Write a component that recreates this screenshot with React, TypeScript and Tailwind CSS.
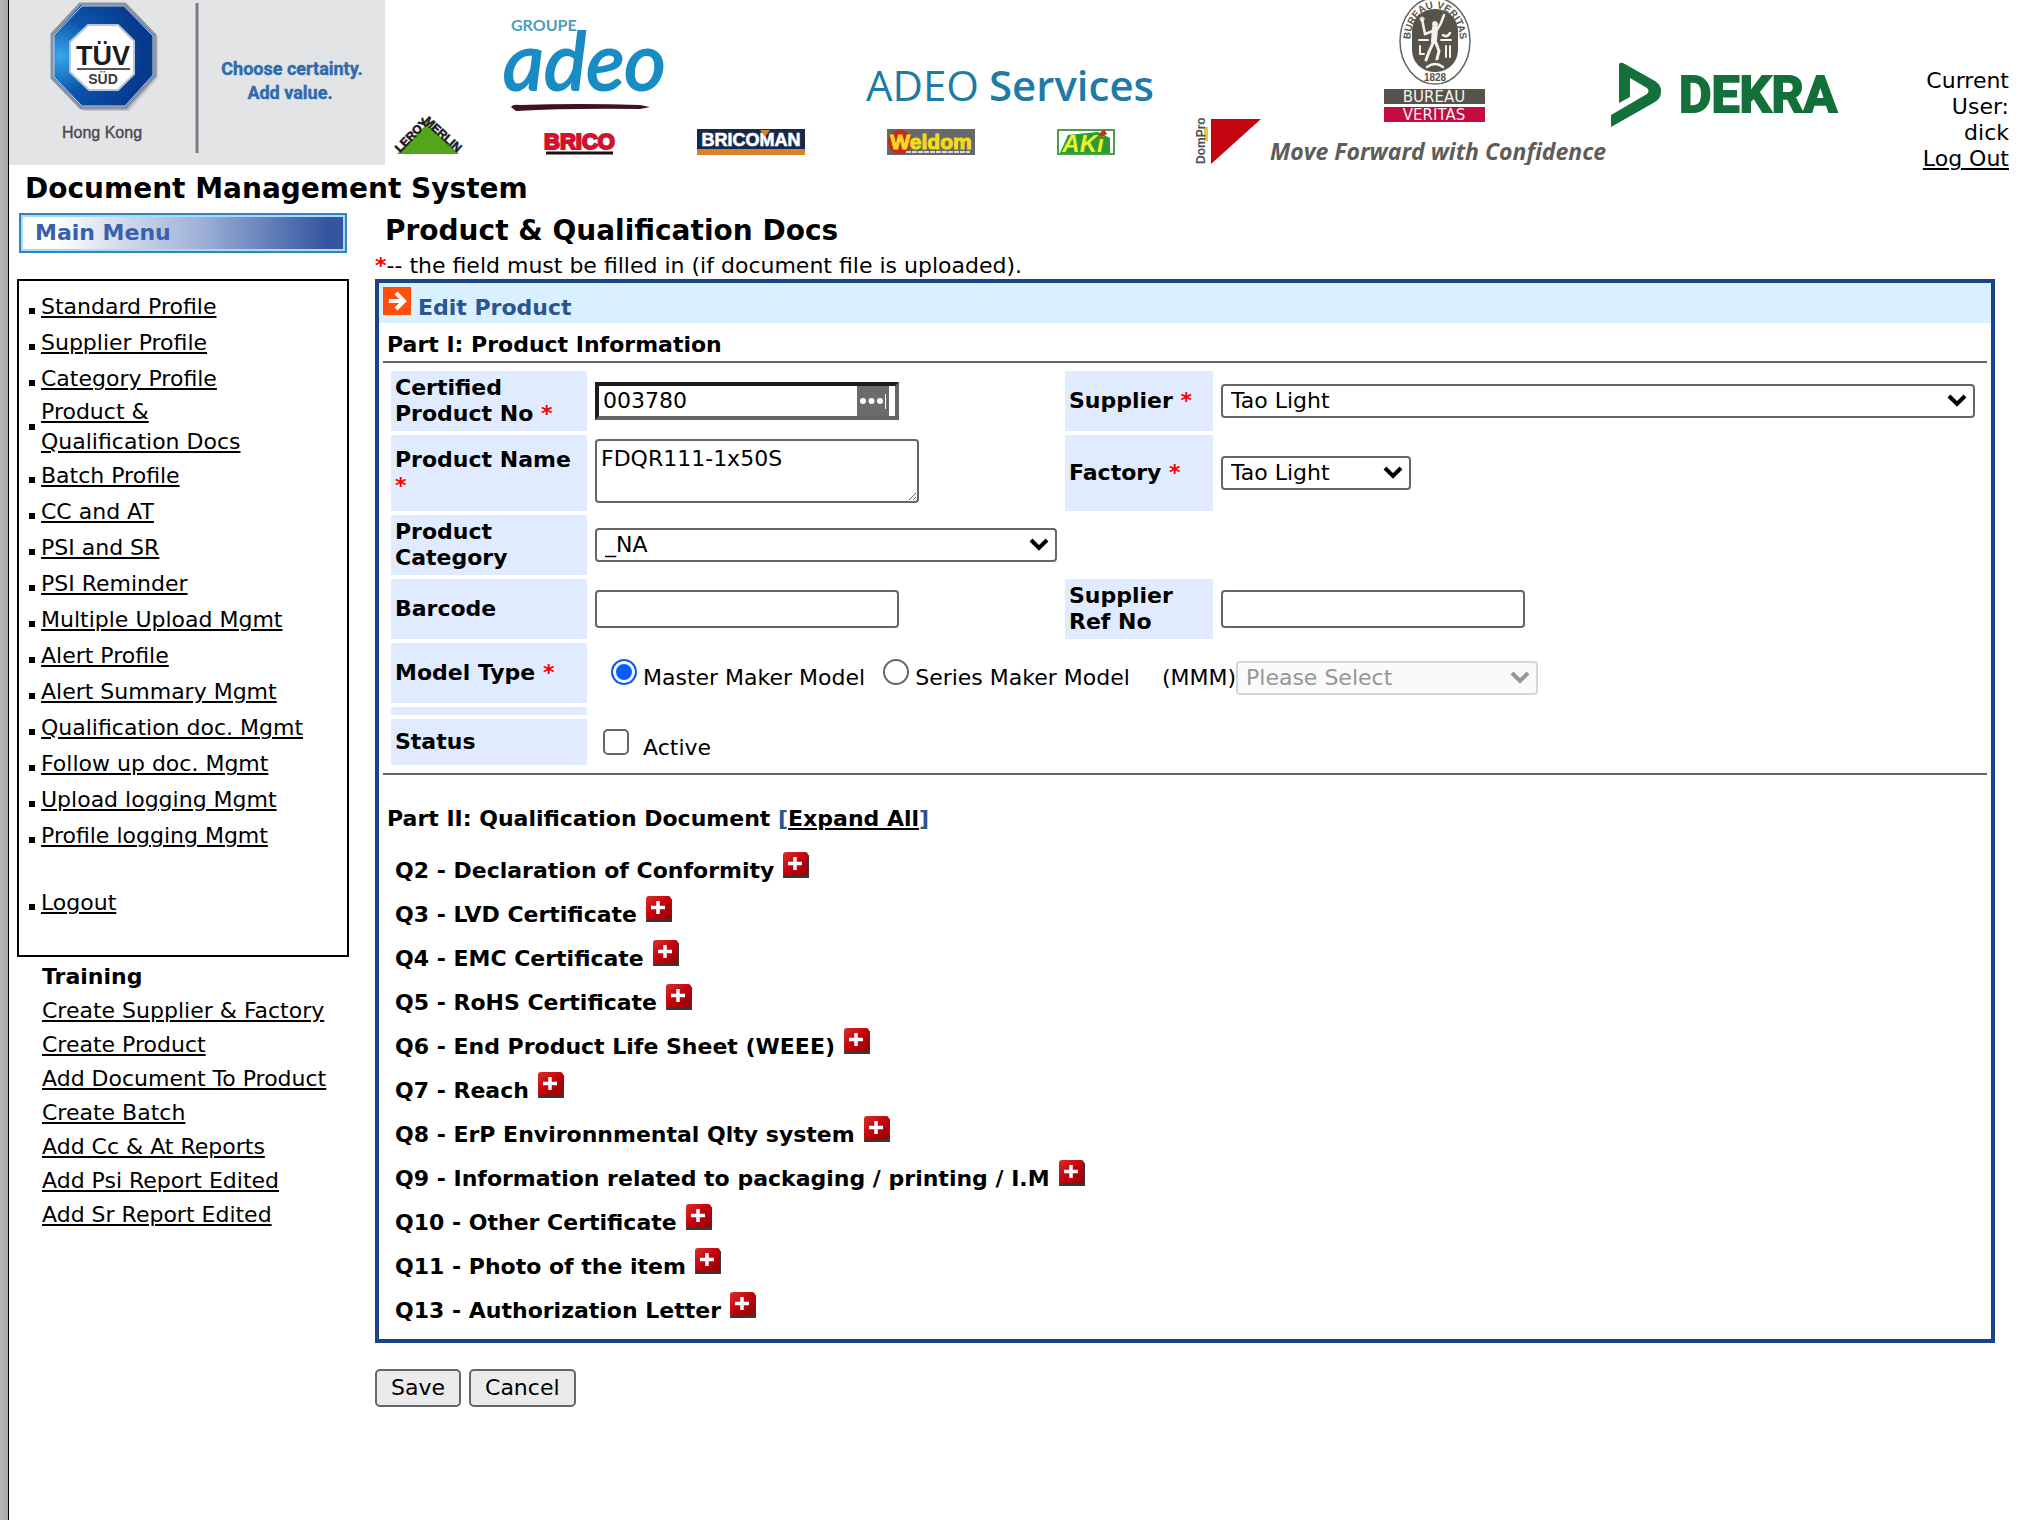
import { useState } from "react";

const menuItems = [
  "Standard Profile",
  "Supplier Profile",
  "Category Profile",
  "Product & Qualification Docs",
  "Batch Profile",
  "CC and AT",
  "PSI and SR",
  "PSI Reminder",
  "Multiple Upload Mgmt",
  "Alert Profile",
  "Alert Summary Mgmt",
  "Qualification doc. Mgmt",
  "Follow up doc. Mgmt",
  "Upload logging Mgmt",
  "Profile logging Mgmt",
];

const trainingItems = [
  "Create Supplier & Factory",
  "Create Product",
  "Add Document To Product",
  "Create Batch",
  "Add Cc & At Reports",
  "Add Psi Report Edited",
  "Add Sr Report Edited",
];

const documents = [
  "Q2 - Declaration of Conformity",
  "Q3 - LVD Certificate",
  "Q4 - EMC Certificate",
  "Q5 - RoHS Certificate",
  "Q6 - End Product Life Sheet (WEEE)",
  "Q7 - Reach",
  "Q8 - ErP Environnmental Qlty system",
  "Q9 - Information related to packaging / printing / I.M",
  "Q10 - Other Certificate",
  "Q11 - Photo of the item",
  "Q13 - Authorization Letter",
];

const linkClass = "underline decoration-2 underline-offset-2";
const labelClass = "flex items-center bg-[#e0ebff] px-1 font-bold";
const inputClass =
  "h-[38px] w-[304px] rounded-[4px] border-2 border-[#666] bg-white px-2 outline-none";

function TuvLogo() {
  return (
    <svg viewBox="9 0 376 165" className="h-[165px] w-[376px] shrink-0 bg-[#e3e4e6]" role="img" aria-label="TÜV SÜD Hong Kong">
      <defs>
        <radialGradient id="tuvBlue" cx="0.08" cy="0.5" r="0.8">
          <stop offset="0" stopColor="#38a6ea" />
          <stop offset="0.45" stopColor="#0b55ab" />
          <stop offset="1" stopColor="#073a8c" />
        </radialGradient>
      </defs>
      <path d="M83 6 L129 6 L158 37 L158 78 L129 111 L84 111 L54 80 Z" fill="#b3b5ba" opacity="0.6" />
      <path d="M80 4 L125 4 L155 35 L155 76 L126 108 L81 108 L52 78 L52 34 Z" fill="url(#tuvBlue)" stroke="#8b93a5" strokeWidth="3" />
      <path d="M82 6 L124 6 L153 36 L153 75 L125 106 L82 106 L54 77 L54 35 Z" fill="none" stroke="#c9d6ea" strokeWidth="1" />
      <path d="M88 25 L118 25 L134 41 L134 74 L118 90 L89 90 L70 72 L70 42 Z" fill="#fff" stroke="#b9c6da" strokeWidth="2" />
      <text x="103" y="65" textAnchor="middle" fontSize="27" fontWeight="700" fontFamily="Liberation Sans, Arial, sans-serif" fill="#1b1b1e">TÜV</text>
      <path d="M77 69 H130" stroke="#55565a" strokeWidth="2" />
      <text x="103" y="84" textAnchor="middle" fontSize="14" fontWeight="700" fontFamily="Liberation Sans, Arial, sans-serif" fill="#3a3a3e">SÜD</text>
      <text x="102" y="138" textAnchor="middle" fontSize="16" fontFamily="Liberation Sans, Arial, sans-serif" fill="#4a4a4e" stroke="#4a4a4e" strokeWidth="0.4">Hong Kong</text>
      <path d="M197 3 V153" stroke="#7b7c82" strokeWidth="3" />
      <g fontSize="18" fontWeight="700" fontFamily="Roboto, sans-serif" fill="#2d6aae" stroke="#2d6aae" strokeWidth="0.4" textAnchor="middle">
        <text x="292" y="75">Choose certainty.</text>
        <text x="290" y="99">Add value.</text>
      </g>
    </svg>
  );
}

function PartnerLogos() {
  return (
    <svg viewBox="385 0 1460 165" className="h-[165px] w-[1460px]" role="img" aria-label="Partner companies">
      {/* Groupe Adeo */}
      <text x="511" y="31" fontSize="16" fontFamily="Lato, sans-serif" fontWeight="700" fill="#4b9dbd">GROUPE</text>
      <text x="503" y="90" fontSize="80" fontStyle="italic" fontFamily="Lato, sans-serif" fill="#1a8cc4" stroke="#1a8cc4" strokeWidth="2">adeo</text>
      <path d="M511 107 Q513 104 520 105 Q580 103 640 105 L650 107 L640 109 Q570 108 516 111 Z" fill="#3e141c" />

      {/* Leroy Merlin */}
      <path d="M427 124 L459 154 H397 Z" fill="#55a51c" />
      <g fontFamily="Liberation Sans, Arial, sans-serif" fontWeight="700" fill="#1c1c1c" stroke="#1c1c1c" strokeWidth="0.6">
        <text transform="translate(400 153) rotate(-46)" fontSize="12">LEROY</text>
        <text transform="translate(423 122) rotate(42)" fontSize="12">MERLIN</text>
      </g>

      {/* Brico */}
      <text x="544" y="149" fontSize="22" fontWeight="700" fontFamily="Liberation Sans, Arial, sans-serif" fill="#d2122e" stroke="#d2122e" strokeWidth="2">BRICO</text>
      <path d="M546 153 H613" stroke="#1d1014" strokeWidth="3" />

      {/* Bricoman */}
      <rect x="697" y="129" width="108" height="20" fill="#17284a" />
      <rect x="697" y="149" width="108" height="6" fill="#d8822c" />
      <text x="751" y="146" textAnchor="middle" fontSize="18" fontWeight="700" fontFamily="Liberation Sans, Arial, sans-serif" fill="#fff" stroke="#fff" strokeWidth="0.6">BRICOMAN</text>
      <path d="M760 130 H770 L765 137 Z" fill="#d8822c" />

      {/* Adeo Services */}
      <g fontSize="42" fontFamily="Open Sans, sans-serif" fill="#1d7ba6">
        <text x="866" y="101">ADEO</text>
        <text x="989" y="101" fontWeight="600">Services</text>
      </g>

      {/* Weldom */}
      <rect x="887" y="129" width="88" height="26" fill="#66686a" />
      <circle cx="900" cy="142" r="12" fill="#c8281e" />
      <text x="931" y="149" textAnchor="middle" fontSize="21" fontWeight="700" fontFamily="Liberation Sans, Arial, sans-serif" fill="#f4dc1c" stroke="#f4dc1c">Weldom</text>
      <path d="M906 152 H970" stroke="#d8d8d8" strokeWidth="2" strokeDasharray="5 1" />

      {/* Aki */}
      <rect x="1058" y="130" width="56" height="24" fill="#fff" stroke="#4aa04a" strokeWidth="2" />
      <path d="M1060 153 L1068 135 L1098 132 L1110 138 V153 Z" fill="#2a9a33" />
      <text x="1083" y="152" textAnchor="middle" fontSize="24" fontWeight="700" fontStyle="italic" fontFamily="Liberation Sans, Arial, sans-serif" fill="#eef02a">AKi</text>
      <path d="M1098 135 L1104 129 L1107 134 L1102 137 Z" fill="#c62f22" />

      {/* DomPro */}
      <path d="M1206 127 V141" stroke="#ecc63a" strokeWidth="4" />
      <text transform="translate(1205 164) rotate(-90)" fontSize="12" fontWeight="700" fontFamily="Liberation Sans, Arial, sans-serif" fill="#47505c">DomPro</text>
      <path d="M1211 119 H1261 L1211 164 Z" fill="#c4040f" />

      {/* Bureau Veritas */}
      <ellipse cx="1435" cy="41" rx="35" ry="43" fill="#fff" stroke="#6a675f" strokeWidth="1.5" />
      <rect x="1412" y="9" width="46" height="63" rx="22" fill="#57534a" />
      <path id="bvTop" d="M1410 48 C1407 -5 1463 -5 1460 48" fill="none" />
      <g fontFamily="Liberation Sans, Arial, sans-serif" fontWeight="700" fill="#57534a">
        <text fontSize="10" textAnchor="middle">
          <textPath href="#bvTop" startOffset="50%">BUREAU VERITAS</textPath>
        </text>
        <text x="1435" y="81" fontSize="10" textAnchor="middle">1828</text>
      </g>
      <g stroke="#f3f2ee" fill="none" strokeLinecap="round">
        <circle cx="1435" cy="24" r="2.5" fill="#f3f2ee" />
        <path d="M1435 28 L1434 41" strokeWidth="6" />
        <path d="M1433 31 L1425 34 L1422 19 M1437 30 L1441 23 L1444 15" strokeWidth="2.5" />
        <path d="M1433 43 L1429 52 L1426 60 M1436 43 L1439 51 L1437 59" strokeWidth="3" />
        <path d="M1419 40 H1428 M1441 40 H1451 M1420 46 V54 H1424 M1446 46 V57 M1450 46 V57" strokeWidth="2" />
        <path d="M1443 35 Q1447 38 1450 33 M1427 67 Q1435 61 1443 67" strokeWidth="2.5" />
        <circle cx="1422" cy="19" r="2" />
      </g>
      <rect x="1384" y="89" width="101" height="15" fill="#57534a" />
      <rect x="1384" y="107" width="101" height="15" fill="#c50b42" />
      <g fontSize="15" fontFamily="DejaVu Sans, sans-serif" fill="#f3f2ee" textAnchor="middle">
        <text x="1434" y="102">BUREAU</text>
        <text x="1434" y="120">VERITAS</text>
      </g>
      <text x="1270" y="160" fontSize="23" fontWeight="700" fontStyle="italic" fontFamily="Open Sans, sans-serif" fill="#5d5c58">Move Forward with Confidence</text>

      {/* Dekra */}
      <path d="M1619 64 Q1620 62 1623 63 L1655 81 Q1662 86 1661 92 Q1661 98 1655 102 L1611 127 V115 L1647 94 Q1650 91 1647 88 L1630 78 V97 L1619 103 Z" fill="#14703a" />
      <text x="1679" y="112" fontSize="50" fontWeight="700" fontFamily="Roboto, sans-serif" fill="#14703a" stroke="#14703a" strokeWidth="2">DEKRA</text>
    </svg>
  );
}

function PlusIcon() {
  return (
    <svg viewBox="0 0 27 27" className="block size-[27px]" aria-hidden="true">
      <defs>
        <linearGradient id="plusRed" x1="0" y1="0" x2="1" y2="1">
          <stop offset="0" stopColor="#d8302c" />
          <stop offset="0.5" stopColor="#c4020c" />
          <stop offset="1" stopColor="#8e0208" />
        </linearGradient>
      </defs>
      <path d="M2 4 H27 V27 H1 Z" fill="#3d3434" />
      <rect x="1" y="1" width="25" height="23" rx="3" fill="url(#plusRed)" />
      <path d="M13 6 V19 M6 12.5 H20" stroke="#fff" strokeWidth="3.5" />
    </svg>
  );
}

function SelectBox({ id, label, value, className = "", disabled = false }) {
  return (
    <span className={`relative inline-flex ${className}`}>
      <select
        id={id}
        aria-label={label}
        disabled={disabled}
        defaultValue={value}
        className="h-[34px] w-full appearance-none rounded-[4px] border-2 border-[#666] bg-white pl-2 pr-8 leading-[26px] text-black outline-none disabled:border-[#d6d6d6] disabled:bg-[#fafafa] disabled:text-[#969696] disabled:opacity-100"
      >
        <option>{value}</option>
      </select>
      <svg
        viewBox="0 0 20 13"
        className={`pointer-events-none absolute right-2 top-[10px] h-[13px] w-5 ${disabled ? "text-[#969696]" : "text-black"}`}
        aria-hidden="true"
      >
        <path d="M2 2 L10 10 L18 2" fill="none" stroke="currentColor" strokeWidth="4" />
      </svg>
    </span>
  );
}

function Required() {
  return <span className="font-bold text-[#ff0000]">*</span>;
}

export default function App() {
  const [productNo, setProductNo] = useState("003780");
  const [productName, setProductName] = useState("FDQR111-1x50S");
  const [modelType, setModelType] = useState("master");
  const [active, setActive] = useState(false);

  const radioClass =
    "size-[26px] shrink-0 appearance-none rounded-full border-2 border-[#666] bg-white checked:border-[#0a5cff] checked:bg-[#0a5cff] checked:shadow-[inset_0_0_0_3px_white]";

  return (
    <div className="flex min-h-screen bg-white font-['DejaVu_Sans',Verdana,sans-serif] text-[22px] leading-[26px] text-black">
      <div className="w-[9px] shrink-0 border-r border-black bg-linear-to-r from-[#b8b8b8] to-[#a6a6a6]" />

      <div className="min-w-0 flex-1">
        <header className="flex">
          <TuvLogo />
          <div className="min-w-0 flex-1 overflow-hidden">
            <PartnerLogos />
          </div>
          <div className="w-[110px] shrink-0 pr-4 pt-[68px] text-right">
            Current User:
            <br />
            dick
            <br />
            <a href="#logout" className={`whitespace-nowrap ${linkClass}`}>Log Out</a>
          </div>
        </header>

        <div className="pl-4 text-[28px] font-bold leading-[34px]">
          Document Management System
        </div>

        <div className="mt-[7px] flex items-start">
          {/* Side menu */}
          <aside className="w-[366px] shrink-0 pl-2 pr-[26px]">
            <div className="mx-0.5 border-2 border-[#2b86c4]">
              <h2 className="border-2 border-[#b5d6f0] bg-linear-to-r from-white from-10% via-[#9fb2d8] via-55% to-[#3655a0] to-95% pl-3 font-bold leading-8 text-[#3b5fa8]">
                Main Menu
              </h2>
            </div>

            <nav className="mt-[26px] border-2 border-black px-2.5 pb-[34px] pt-2">
              <ul>
                {menuItems.map((item) =>
                  item.startsWith("Product") ? (
                    <li key={item} className="flex items-center gap-1.5 pb-px leading-[30px]">
                      <span className="size-1.5 shrink-0 bg-black" />
                      <a href="#menu" className={`w-[210px] ${linkClass}`}>{item}</a>
                    </li>
                  ) : (
                    <li key={item} className="flex items-baseline gap-1.5 leading-9">
                      <span className="size-1.5 shrink-0 bg-black" />
                      <a href="#menu" className={linkClass}>{item}</a>
                    </li>
                  )
                )}
                <li className="mt-[31px] flex items-baseline gap-1.5 leading-9">
                  <span className="size-1.5 shrink-0 bg-black" />
                  <a href="#logout" className={linkClass}>Logout</a>
                </li>
              </ul>
            </nav>

            <div className="mt-[3px] whitespace-nowrap pl-[25px] leading-[34px]">
              <h3 className="font-bold">Training</h3>
              <ul>
                {trainingItems.map((item) => (
                  <li key={item}>
                    <a href="#training" className={linkClass}>{item}</a>
                  </li>
                ))}
              </ul>
            </div>
          </aside>

          {/* Product form */}
          <main className="min-w-0 flex-1 pr-[30px] pt-px">
            <h1 className="pl-2.5 text-[28px] font-bold leading-[34px]">Product & Qualification Docs</h1>
            <p className="mt-[5px]">
              <Required />
              -- the field must be filled in (if document file is uploaded).
            </p>

            <form onSubmit={(e) => e.preventDefault()}>
              <div className="border-4 border-[#1c438a] pb-1.5">
                <div className="flex h-10 items-baseline gap-[7px] bg-[#d8f0ff] pl-1 pt-1">
                  <svg viewBox="0 0 28 28" className="size-7 shrink-0" aria-hidden="true">
                    <rect width="28" height="28" fill="#ff4f0d" />
                    <path d="M6 14 H22 M13 6 L21 14 L13 22" fill="none" stroke="#fff" strokeWidth="4" />
                  </svg>
                  <h2 className="font-bold text-[#2a5590]">Edit Product</h2>
                </div>

                <h3 className="mb-[3px] mt-[9px] pl-2 font-bold">Part I: Product Information</h3>
                <hr className="mx-1 border-t-2 border-[#666]" />

                <div className="mx-3 my-2 grid grid-cols-[196px_470px_148px_1fr] gap-1">
                  <label htmlFor="productNo" className={`min-h-[60px] ${labelClass}`}>
                    <span>
                      Certified
                      <br />
                      Product No <Required />
                    </span>
                  </label>
                  <div className="flex items-center pl-1">
                    <div className="flex h-[38px] w-[304px] border-4 border-b-[#666] border-l-[#1c1c1c] border-r-[#666] border-t-[#1c1c1c] bg-white">
                      <input
                        id="productNo"
                        value={productNo}
                        onChange={(e) => setProductNo(e.target.value)}
                        className="min-w-0 flex-1 pl-1 outline-none"
                      />
                      <button type="button" aria-label="Fill in" className="mr-1.5 flex w-8 items-center justify-center bg-[#6b6b6b]">
                        <svg viewBox="0 0 32 30" className="h-[30px] w-8" aria-hidden="true">
                          <g fill="#fff">
                            <circle cx="6" cy="15" r="3" />
                            <circle cx="14.5" cy="15" r="3" />
                            <circle cx="23" cy="15" r="3" />
                            <rect x="28" y="8" width="1" height="15" />
                          </g>
                        </svg>
                      </button>
                    </div>
                  </div>
                  <label htmlFor="supplier" className={labelClass}>
                    <span>Supplier <Required /></span>
                  </label>
                  <div className="flex items-center px-1">
                    <SelectBox id="supplier" value="Tao Light" className="w-full" />
                  </div>

                  <label htmlFor="productName" className={`min-h-[76px] ${labelClass}`}>
                    <span>
                      Product Name
                      <br />
                      <Required />
                    </span>
                  </label>
                  <div className="pl-1 pt-1">
                    <textarea
                      id="productName"
                      value={productName}
                      onChange={(e) => setProductName(e.target.value)}
                      className="block h-16 w-[324px] rounded-[4px] border-2 border-[#666] bg-white px-1 py-[5px] outline-none"
                    />
                  </div>
                  <label htmlFor="factory" className={labelClass}>
                    <span>Factory <Required /></span>
                  </label>
                  <div className="flex items-center pl-1">
                    <SelectBox id="factory" value="Tao Light" className="w-[190px]" />
                  </div>

                  <label htmlFor="category" className={`min-h-[60px] ${labelClass}`}>
                    <span>
                      Product
                      <br />
                      Category
                    </span>
                  </label>
                  <div className="col-span-3 flex items-center pl-1">
                    <SelectBox id="category" value="_NA" className="w-[462px]" />
                  </div>

                  <label htmlFor="barcode" className={`min-h-[60px] ${labelClass}`}>Barcode</label>
                  <div className="flex items-center pl-1">
                    <input id="barcode" className={inputClass} />
                  </div>
                  <label htmlFor="supplierRef" className={labelClass}>
                    <span>
                      Supplier
                      <br />
                      Ref No
                    </span>
                  </label>
                  <div className="flex items-center pl-1">
                    <input id="supplierRef" className={inputClass} />
                  </div>

                  <div className={`min-h-[60px] ${labelClass}`}>
                    <span>Model Type <Required /></span>
                  </div>
                  <div className="col-span-3 flex items-baseline whitespace-nowrap pl-5 pt-4">
                    <label className="flex items-baseline gap-1.5">
                      <input
                        type="radio"
                        name="modelType"
                        className={radioClass}
                        checked={modelType === "master"}
                        onChange={() => setModelType("master")}
                      />
                      Master Maker Model
                    </label>
                    <label className="ml-[18px] flex items-baseline gap-1.5">
                      <input
                        type="radio"
                        name="modelType"
                        className={radioClass}
                        checked={modelType === "series"}
                        onChange={() => setModelType("series")}
                      />
                      Series Maker Model
                    </label>
                    <span className="ml-8">(MMM)</span>
                    <SelectBox id="mmm" label="MMM" value="Please Select" className="w-[302px]" disabled />
                  </div>

                  <div className="h-2 bg-[#e0ebff]" />
                  <div className="col-span-3" />

                  <div className={`min-h-[46px] ${labelClass}`}>Status</div>
                  <div className="col-span-3 flex pl-3 pt-2.5">
                    <label className="flex items-baseline gap-3.5">
                      <input
                        type="checkbox"
                        className="size-[26px] appearance-none rounded-[5px] border-2 border-[#666] bg-white checked:bg-[#0a5cff]"
                        checked={active}
                        onChange={(e) => setActive(e.target.checked)}
                      />
                      Active
                    </label>
                  </div>
                </div>
                <hr className="mx-1 border-t-2 border-[#666]" />

                <h3 className="mt-[31px] pl-2 font-bold">
                  Part II: Qualification Document{" "}
                  <span className="text-[#2a5590]">
                    [<a href="#expand" className={`text-black ${linkClass}`}>Expand All</a>]
                  </span>
                </h3>

                <ul className="mt-[17px] pl-4 font-bold">
                  {documents.map((doc) => (
                    <li key={doc} className="flex h-11 items-baseline gap-2 leading-[44px]">
                      {doc}
                      <button type="button" aria-label={`Expand ${doc}`}>
                        <PlusIcon />
                      </button>
                    </li>
                  ))}
                </ul>
              </div>

              <div className="mt-[26px] flex gap-2">
                <button type="submit" className="h-[38px] rounded-[5px] border-2 border-[#666] bg-[#ebebeb] px-3.5">
                  Save
                </button>
                <button type="button" className="h-[38px] rounded-[5px] border-2 border-[#666] bg-[#ebebeb] px-3.5">
                  Cancel
                </button>
              </div>
            </form>
          </main>
        </div>
      </div>
    </div>
  );
}
